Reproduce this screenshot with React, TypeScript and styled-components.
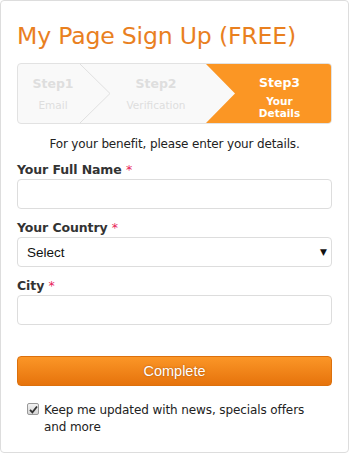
import styled, { createGlobalStyle } from 'styled-components';

const GlobalStyle = createGlobalStyle`
  html, body {
    margin: 0;
    padding: 0;
    background: #fff;
  }
  body {
    font-family: "DejaVu Sans", Verdana, sans-serif;
    color: #333;
  }
`;

const Card = styled.div`
  box-sizing: border-box;
  width: 349px;
  height: 453px;
  border: 1px solid #ddd;
  border-radius: 4px;
  padding: 19px 16px 0;
`;

const Title = styled.h1`
  margin: 0 0 11px;
  font-size: 23.6px;
  font-weight: normal;
  color: #e9801f;
  line-height: 32px;
  letter-spacing: -0.2px;
`;

const StepBar = styled.div`
  box-sizing: border-box;
  display: flex;
  height: 61px;
  border: 1px solid #e2e2e2;
  border-radius: 4px;
  background: #f9f9f9;
  overflow: hidden;
`;

const Step = styled.div<{ $width: number; $pad: number; $active?: boolean }>`
  position: relative;
  box-sizing: border-box;
  width: ${(p) => p.$width}px;
  padding-left: ${(p) => p.$pad}px;
  display: flex;
  flex-direction: column;
  align-items: center;
  text-align: center;
  color: ${(p) => (p.$active ? '#fff' : '#dedede')};
  background: ${(p) => (p.$active ? '#fb9624' : 'transparent')};
  clip-path: ${(p) =>
    p.$active ? 'polygon(0 0, 100% 0, 100% 100%, 0 100%, 29px 50%)' : 'none'};
  flex: ${(p) => (p.$active ? '1' : 'none')};
`;

const StepName = styled.div<{ $top: number }>`
  margin-top: ${(p) => p.$top}px;
  font-size: 12.5px;
  font-weight: bold;
  line-height: 16px;
`;

const StepSub = styled.div<{ $bold?: boolean; $top: number }>`
  margin-top: ${(p) => p.$top}px;
  font-size: 10.5px;
  font-weight: ${(p) => (p.$bold ? 'bold' : 'normal')};
  line-height: 12px;
`;

const Chevron = styled.svg`
  position: absolute;
  top: 0;
  left: 100%;
  width: 31px;
  height: 59px;
  z-index: 1;
`;

const Intro = styled.p`
  margin: 12px 0 10px;
  text-align: center;
  font-size: 12px;
  line-height: 16px;
  color: #222;
  letter-spacing: -0.15px;
`;

const Field = styled.div`
  margin-bottom: 11px;
`;

const Label = styled.label`
  display: block;
  font-size: 12.5px;
  font-weight: bold;
  color: #333;
  line-height: 15px;
  margin-bottom: 2px;
  letter-spacing: -0.1px;

  span {
    color: #e8235a;
    font-weight: normal;
  }
`;

const TextInput = styled.input`
  box-sizing: border-box;
  display: block;
  width: 100%;
  height: 30px;
  border: 1px solid #ddd;
  border-radius: 4px;
  padding: 0 9px;
  font-size: 14px;
  font-family: "Liberation Sans", Arial, sans-serif;
  outline: none;
`;

const SelectWrap = styled.div`
  position: relative;

  &::after {
    content: '▼';
    position: absolute;
    right: 5px;
    top: 10px;
    font-size: 9px;
    line-height: 10px;
    color: #111;
    pointer-events: none;
  }
`;

const Select = styled.select`
  box-sizing: border-box;
  display: block;
  width: 100%;
  height: 30px;
  border: 1px solid #ddd;
  border-radius: 4px;
  padding: 0 9px;
  font-size: 13.5px;
  font-family: "Liberation Sans", Arial, sans-serif;
  color: #111;
  background: #fff;
  appearance: none;
  outline: none;
`;

const Submit = styled.button`
  box-sizing: border-box;
  display: block;
  width: 100%;
  height: 30px;
  margin-top: 31px;
  border: 1px solid #dc700c;
  border-radius: 4px;
  background: linear-gradient(#fb9627, #e6730c);
  color: #fff;
  font-family: "Liberation Sans", Arial, sans-serif;
  font-size: 14.5px;
  text-shadow: 0 0 2px rgba(120, 50, 0, 0.6);
  cursor: pointer;
`;

const Agree = styled.label`
  display: flex;
  align-items: flex-start;
  gap: 5px;
  margin: 16px 0 0 10px;
  padding-right: 24px;
  font-size: 12px;
  line-height: 17px;
  color: #222;
  letter-spacing: -0.1px;
`;

const CheckBox = styled.span`
  flex: none;
  box-sizing: border-box;
  width: 12px;
  height: 12px;
  margin-top: 1px;
  border: 1px solid #999;
  border-radius: 2px;
  background: linear-gradient(#f2f2f2, #d6d6d6);
  display: flex;
  align-items: center;
  justify-content: center;
`;

export default function App() {
  return (
    <>
      <GlobalStyle />
      <Card>
        <Title>My Page Sign Up (FREE)</Title>

        <StepBar>
          <Step $width={62} $pad={8}>
            <StepName $top={12}>Step1</StepName>
            <StepSub $top={7}>Email</StepSub>
            <Chevron viewBox="0 0 31 59">
              <polygon points="0,0 30,29.5 0,59" fill="#f9f9f9" />
              <polyline points="0,0 30,29.5 0,59" fill="none" stroke="#e0e0e0" strokeWidth="1" />
            </Chevron>
          </Step>
          <Step $width={126} $pad={26}>
            <StepName $top={12}>Step2</StepName>
            <StepSub $top={7}>Verification</StepSub>
          </Step>
          <Step $active $width={124} $pad={22}>
            <StepName $top={11}>Step3</StepName>
            <StepSub $bold $top={4}>Your</StepSub>
            <StepSub $bold $top={0}>Details</StepSub>
          </Step>
        </StepBar>

        <Intro>For your benefit, please enter your details.</Intro>

        <Field>
          <Label>
            Your Full Name <span>*</span>
          </Label>
          <TextInput type="text" />
        </Field>

        <Field>
          <Label>
            Your Country <span>*</span>
          </Label>
          <SelectWrap>
            <Select defaultValue="">
              <option value="">Select</option>
            </Select>
          </SelectWrap>
        </Field>

        <Field>
          <Label>
            City <span>*</span>
          </Label>
          <TextInput type="text" />
        </Field>

        <Submit type="button">Complete</Submit>

        <Agree>
          <CheckBox>
            <svg width="9" height="9" viewBox="0 0 9 9">
              <path d="M1 4.8 L3.4 7.3 L8 1.5" fill="none" stroke="#333" strokeWidth="1.8" />
            </svg>
          </CheckBox>
          Keep me updated with news, specials offers and more
        </Agree>
      </Card>
    </>
  );
}
